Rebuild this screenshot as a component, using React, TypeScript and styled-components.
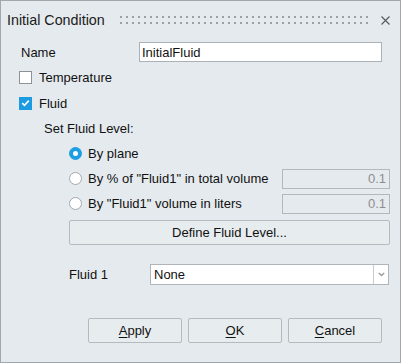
import React from "react";
import styled, { createGlobalStyle } from "styled-components";

const Global = createGlobalStyle`
  html, body { margin: 0; padding: 0; background: #ffffff; }
  * { box-sizing: border-box; }
`;

const BG = "#e5eaee";

const Dialog = styled.div`
  width: 401px;
  height: 363px;
  border: 1px solid #a2a7ac;
  background: ${BG};
  font-family: "Liberation Sans", Arial, sans-serif;
  font-size: 13px;
  color: #111111;
  display: flex;
  flex-direction: column;
`;

const TitleBar = styled.div`
  height: 38px;
  display: flex;
  align-items: center;
  padding: 0 10px 0 6px;
`;

const Title = styled.div`
  font-size: 14.3px;
  color: #1a1a1a;
`;

const Grip = styled.div`
  flex: 1;
  height: 8px;
  margin: 0 10px 0 15px;
  background:
    linear-gradient(to bottom, transparent 2px, ${BG} 2px, ${BG} 6px, transparent 6px),
    repeating-linear-gradient(to right, #9aa0a6 0 2px, transparent 2px 6px);
`;

const CloseIcon = styled.svg`
  width: 9px;
  height: 9px;
  display: block;
`;

const Body = styled.div`
  display: flex;
  flex-direction: column;
  padding: 3px 10px 0 18px;
`;

const NameRow = styled.div`
  height: 20px;
  display: flex;
  align-items: center;
`;

const NameLabel = styled.span`
  width: 120px;
  padding-left: 2px;
`;

const TextInput = styled.input`
  width: 243px;
  height: 20px;
  border: 1px solid #acb1b6;
  background: #ffffff;
  padding: 0 2px;
  font: inherit;
  color: #111111;
  outline: none;
`;

const CheckRow = styled.div<{ $h: number; $mt?: number }>`
  height: ${(p) => p.$h}px;
  margin-top: ${(p) => p.$mt ?? 0}px;
  display: flex;
  align-items: center;
  gap: 7px;
`;

const Box = styled.span<{ $checked?: boolean }>`
  width: 13px;
  height: 13px;
  border: 1px solid ${(p) => (p.$checked ? "#1b9be0" : "#8d9297")};
  background: ${(p) => (p.$checked ? "#1b9be0" : "#ffffff")};
  display: flex;
  align-items: center;
  justify-content: center;
`;

const SectionLabel = styled.div`
  height: 25px;
  display: flex;
  align-items: center;
  padding-left: 25px;
`;

const RadioRow = styled.div`
  height: 25px;
  display: flex;
  align-items: center;
  padding-left: 50px;
`;

const RadioCircle = styled.span<{ $checked?: boolean }>`
  width: 13px;
  height: 13px;
  border-radius: 50%;
  border: 1px solid ${(p) => (p.$checked ? "#1e9fe3" : "#a4a9ae")};
  background: ${(p) => (p.$checked ? "#1e9fe3" : "#ffffff")};
  display: flex;
  align-items: center;
  justify-content: center;
  margin-right: 6px;
  &::after {
    content: "";
    width: 5px;
    height: 5px;
    border-radius: 50%;
    background: #ffffff;
    display: ${(p) => (p.$checked ? "block" : "none")};
  }
`;

const RadioText = styled.span`
  flex: 1;
`;

const ValueField = styled.div`
  width: 108px;
  height: 20px;
  border: 1px solid #b3b8bd;
  background: ${BG};
  color: #8e8e8e;
  text-align: right;
  padding-right: 3px;
  line-height: 18px;
`;

const WideButton = styled.div`
  margin: 4px 0 0 50px;
  height: 25px;
  border: 1px solid #b5babf;
  border-radius: 2px;
  background: #e7ecef;
  display: flex;
  align-items: center;
  justify-content: center;
`;

const ComboRow = styled.div`
  margin: 19px 0 0 50px;
  height: 21px;
  display: flex;
  align-items: center;
`;

const ComboLabel = styled.span`
  width: 81px;
`;

const Combo = styled.div`
  width: 239px;
  height: 21px;
  border: 1px solid #b0b5ba;
  background: #ffffff;
  display: flex;
  align-items: stretch;
`;

const ComboText = styled.span`
  flex: 1;
  padding-left: 3px;
  line-height: 19px;
`;

const ComboArrow = styled.span`
  width: 15px;
  border-left: 1px solid #c8ccd0;
  display: flex;
  align-items: center;
  justify-content: center;
`;

const ButtonRow = styled.div`
  margin-top: 33px;
  display: flex;
  justify-content: flex-end;
  gap: 6px;
  padding-right: 8px;
`;

const DlgButton = styled.div`
  width: 94px;
  height: 25px;
  border: 1px solid #b5babf;
  border-radius: 2px;
  background: #e7ecef;
  display: flex;
  align-items: center;
  justify-content: center;
  u { text-decoration-thickness: 1px; text-underline-offset: 2px; }
`;

export default function App() {
  return (
    <>
      <Global />
      <Dialog>
        <TitleBar>
          <Title>Initial Condition</Title>
          <Grip />
          <CloseIcon viewBox="0 0 9 9">
            <path d="M0.5 0.5 L8.5 8.5 M8.5 0.5 L0.5 8.5" stroke="#555a5f" strokeWidth="1.1" />
          </CloseIcon>
        </TitleBar>
        <Body>
          <NameRow>
            <NameLabel>Name</NameLabel>
            <TextInput defaultValue="InitialFluid" />
          </NameRow>
          <CheckRow $h={25} $mt={3}>
            <Box />
            <span>Temperature</span>
          </CheckRow>
          <CheckRow $h={26}>
            <Box $checked>
              <svg width="9" height="8" viewBox="0 0 9 8">
                <path d="M1.2 4.2 L3.5 6.3 L7.8 1.6" stroke="#ffffff" strokeWidth="1.6" fill="none" />
              </svg>
            </Box>
            <span>Fluid</span>
          </CheckRow>
          <SectionLabel>Set Fluid Level:</SectionLabel>
          <RadioRow>
            <RadioCircle $checked />
            <RadioText>By plane</RadioText>
          </RadioRow>
          <RadioRow>
            <RadioCircle />
            <RadioText>By % of "Fluid1" in total volume</RadioText>
            <ValueField>0.1</ValueField>
          </RadioRow>
          <RadioRow>
            <RadioCircle />
            <RadioText>By "Fluid1" volume in liters</RadioText>
            <ValueField>0.1</ValueField>
          </RadioRow>
          <WideButton>Define Fluid Level...</WideButton>
          <ComboRow>
            <ComboLabel>Fluid 1</ComboLabel>
            <Combo>
              <ComboText>None</ComboText>
              <ComboArrow>
                <svg width="7" height="5" viewBox="0 0 7 5">
                  <path d="M0.8 1 L3.5 3.6 L6.2 1" stroke="#9a9ea2" strokeWidth="1.4" fill="none" />
                </svg>
              </ComboArrow>
            </Combo>
          </ComboRow>
          <ButtonRow>
            <DlgButton>
              <span><u>A</u>pply</span>
            </DlgButton>
            <DlgButton>
              <span><u>O</u>K</span>
            </DlgButton>
            <DlgButton>
              <span><u>C</u>ancel</span>
            </DlgButton>
          </ButtonRow>
        </Body>
      </Dialog>
    </>
  );
}
